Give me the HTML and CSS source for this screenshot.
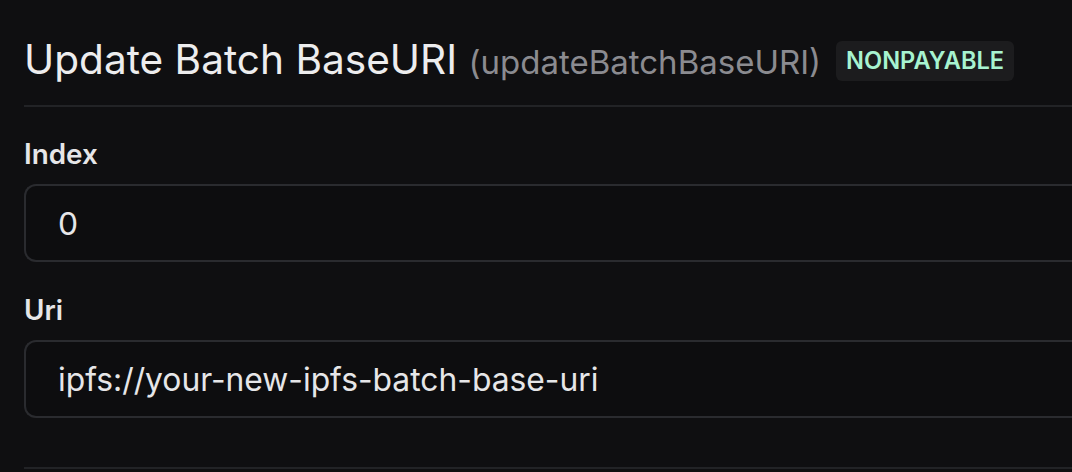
FILE: index.html
```html
<!DOCTYPE html>
<html lang="en">
<head>
<meta charset="utf-8">
<link rel="stylesheet" href="styles.css">
</head>
<body>
<div class="card">
  <div class="header">
    <h1 class="title">Update Batch BaseURI <span class="fn">(updateBatchBaseURI)</span></h1>
    <span class="badge">NONPAYABLE</span>
  </div>
  <div class="fields">
    <div class="field">
      <label class="label">Index</label>
      <div class="input">0</div>
    </div>
    <div class="field">
      <label class="label">Uri</label>
      <div class="input">ipfs://your-new-ipfs-batch-base-uri</div>
    </div>
  </div>
  <div class="footer"></div>
</div>
</body>
</html>
```

FILE: styles.css
```css
html, body {
  margin: 0;
  padding: 0;
  background: #0f0f11;
}
body {
  font-family: Inter, "Noto Sans", sans-serif;
  color: #ededee;
  width: 1072px;
  height: 472px;
  overflow: hidden;
}
.card {
  padding-left: 24px;
}
.header {
  display: flex;
  align-items: center;
  gap: 15px;
  border-bottom: 2px solid #222326;
  box-sizing: border-box;
  height: 107px;
  padding-top: 16px;
}
.title {
  margin: 0;
  font-size: 40.6px;
  font-weight: 400;
  line-height: 48px;
  color: #ededee;
  white-space: nowrap;
}
.fn {
  font-size: 33px;
  color: #8b8b90;
}
.badge {
  display: inline-flex;
  align-items: center;
  height: 40px;
  padding: 0 10px;
  border-radius: 6px;
  background: #1c1c1e;
  color: #a7f3d0;
  font-size: 23.6px;
  font-weight: 600;
}
.fields {
  display: flex;
  flex-direction: column;
  padding-top: 31px;
  gap: 32px;
}
.field {
  display: flex;
  flex-direction: column;
  gap: 14px;
}
.label {
  font-size: 27.8px;
  font-weight: 600;
  color: #e6e6e8;
  line-height: 32px;
}
.input {
  height: 78px;
  box-sizing: border-box;
  border: 2px solid #2a2b2f;
  border-right: none;
  border-radius: 12px 0 0 12px;
  background: #0d0d0f;
  display: flex;
  align-items: center;
  padding-left: 32px;
  font-size: 31.8px;
  color: #e6e6e8;
}
.footer {
  margin-top: 49px;
  border-top: 2px solid #222326;
}
```
